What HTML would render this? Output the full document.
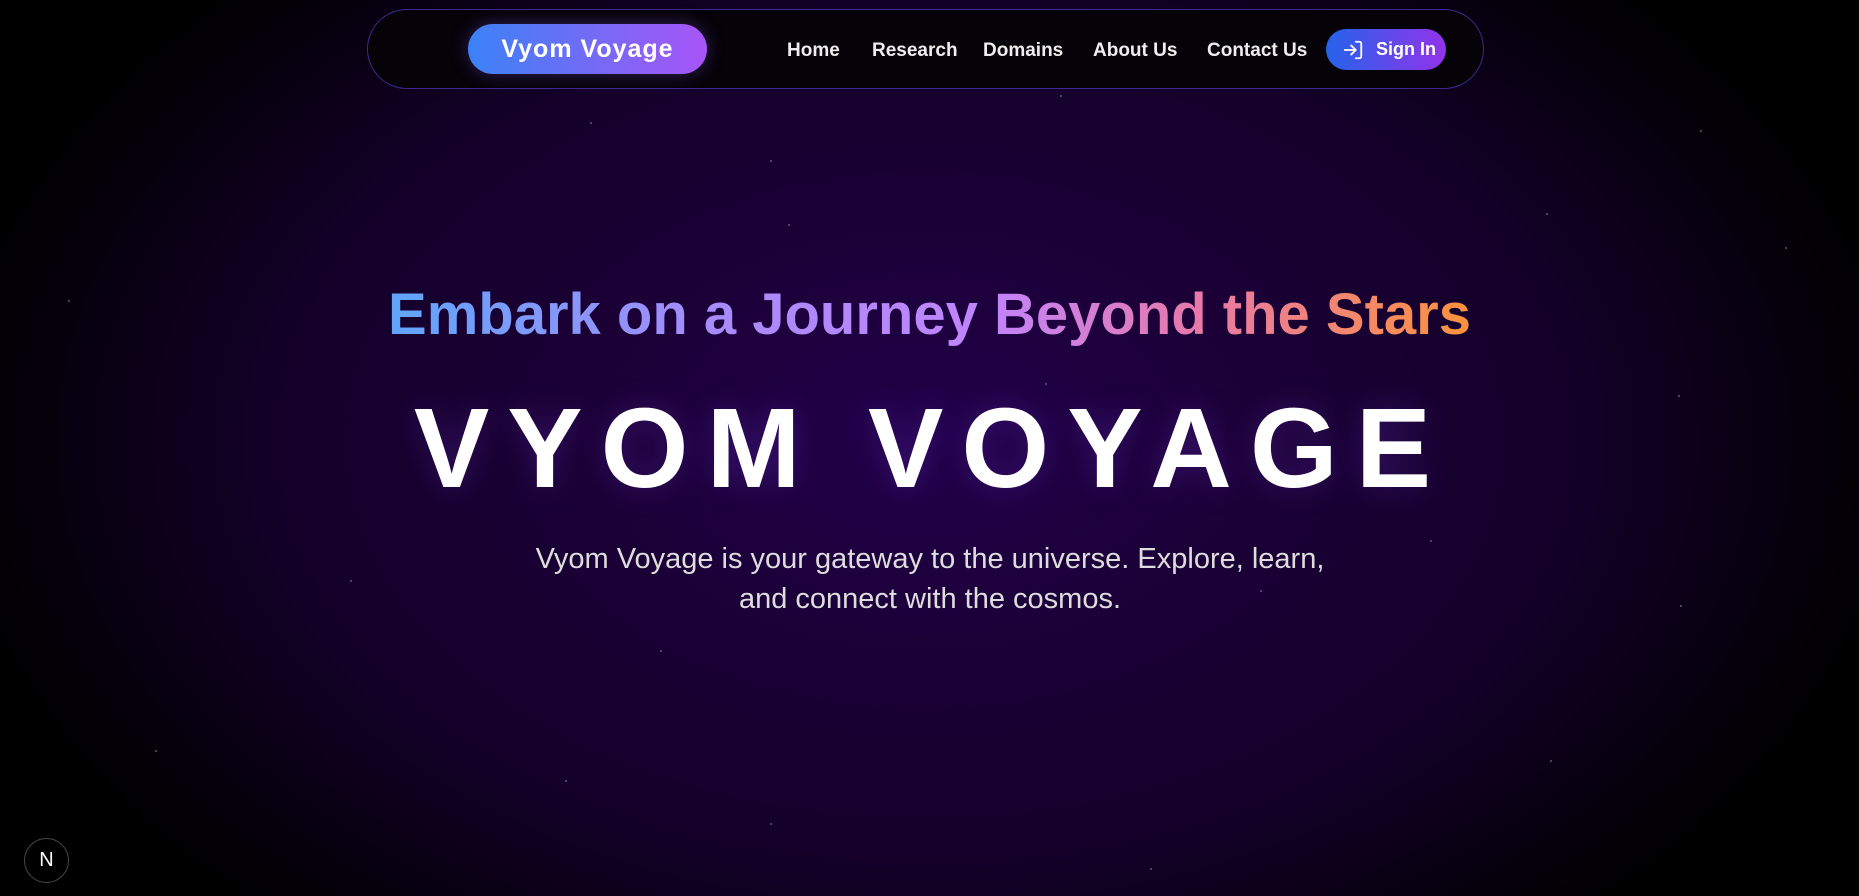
<!DOCTYPE html>
<html><head><meta charset="utf-8"><style>
*{margin:0;padding:0;box-sizing:border-box}
html,body{width:1859px;height:896px;overflow:hidden}
body{background:radial-gradient(ellipse 980px 640px at 925px 440px,#21004a 0%,#1b0036 35%,#14002a 65%,#000 100%);font-family:"Liberation Sans",sans-serif;position:relative}
.star{position:absolute;width:2px;height:2px;background:#8a7aa0;border-radius:50%;opacity:.7}
nav{position:absolute;left:367px;top:9px;width:1117px;height:80px;border:1px solid #3b2a90;border-radius:40px;background:#050208}
.logo{position:absolute;left:100px;top:14px;width:239px;height:50px;border-radius:25px;background:linear-gradient(90deg,#3b82f6,#a855f7);color:#fff;font-weight:bold;font-size:25px;letter-spacing:1px;text-align:center;line-height:50px;box-shadow:0 0 18px rgba(140,90,240,.35)}
.lk{position:absolute;color:#eee;font-size:19px;font-weight:bold}
.sign{position:absolute;left:958px;top:19px;width:120px;height:41px;border-radius:21px;background:linear-gradient(90deg,#2563eb,#9333ea);color:#fff;font-size:18px;font-weight:bold;line-height:41px;padding-left:50px}
.sign svg{position:absolute;left:16px;top:10px}
.h2w{position:absolute;left:0;width:1859px;top:281px;text-align:center}
h2{display:inline-block;font-size:58px;font-weight:bold;background:linear-gradient(90deg,#60a5fa,#a78bfa 30%,#c084fc 55%,#e879a9 75%,#fb923c);-webkit-background-clip:text;background-clip:text;color:transparent;-webkit-text-fill-color:transparent}
h1{position:absolute;left:0;width:1859px;padding-left:4px;top:378px;text-align:center;font-size:113px;font-weight:900;color:#fff;letter-spacing:18px;line-height:140px;text-shadow:0 0 30px rgba(120,60,220,.3)}
p{position:absolute;left:380px;width:1100px;top:539px;text-align:center;font-size:29px;line-height:40px;color:#ddd}
.n{position:absolute;left:24px;top:838px;width:45px;height:45px;border-radius:50%;background:#000;border:1px solid #444;color:#fff;font-size:20px;text-align:center;line-height:43px}
</style></head><body>
<div class="star" style="left:590px;top:122px"></div><div class="star" style="left:788px;top:224px"></div><div class="star" style="left:770px;top:160px"></div><div class="star" style="left:1546px;top:213px"></div><div class="star" style="left:1785px;top:247px"></div><div class="star" style="left:1678px;top:395px"></div><div class="star" style="left:68px;top:300px"></div><div class="star" style="left:1045px;top:383px"></div><div class="star" style="left:1430px;top:540px"></div><div class="star" style="left:660px;top:650px"></div><div class="star" style="left:565px;top:780px"></div><div class="star" style="left:1550px;top:760px"></div><div class="star" style="left:1680px;top:605px"></div><div class="star" style="left:155px;top:750px"></div><div class="star" style="left:1260px;top:590px"></div><div class="star" style="left:770px;top:823px"></div><div class="star" style="left:1150px;top:868px"></div><div class="star" style="left:350px;top:580px"></div><div class="star" style="left:1700px;top:130px"></div><div class="star" style="left:1060px;top:95px"></div>
<nav>
<div class="logo">Vyom Voyage</div>
<span class="lk" style="left:419px;top:30px">Home</span>
<span class="lk" style="left:504px;top:30px">Research</span>
<span class="lk" style="left:615px;top:30px">Domains</span>
<span class="lk" style="left:725px;top:30px">About Us</span>
<span class="lk" style="left:839px;top:30px">Contact Us</span>
<div class="sign"><svg width="22" height="22" viewBox="0 0 24 24" fill="none" stroke="#fff" stroke-width="2" stroke-linecap="round" stroke-linejoin="round"><path d="M15 3h4a2 2 0 0 1 2 2v14a2 2 0 0 1-2 2h-4"/><path d="M10 17l5-5-5-5"/><path d="M15 12H3"/></svg>Sign In</div>
</nav>
<div class="h2w"><h2>Embark on a Journey Beyond the Stars</h2></div>
<h1>VYOM VOYAGE</h1>
<p>Vyom Voyage is your gateway to the universe. Explore, learn,<br>and connect with the cosmos.</p>
<div class="n">N</div>
</body></html>
